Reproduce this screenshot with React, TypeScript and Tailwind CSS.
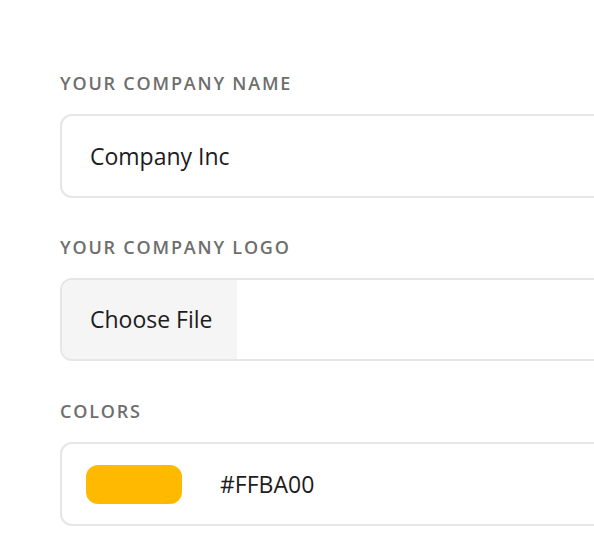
export default function App() {
  return (
    <div className="h-[550px] w-[594px] overflow-hidden bg-white" style={{ fontFamily: "'Open Sans', 'Noto Sans', sans-serif" }}>
      <div className="flex w-[660px] flex-col pl-[60px] pt-[70px]">
        <label className="text-[18px] leading-[26px] font-semibold uppercase tracking-[0.1em] text-[#6e6e6e]">
          Your Company Name
        </label>
        <div className="mt-[18px] flex h-[84px] items-center rounded-[12px] border-2 border-[#e6e6e6] px-[28px]">
          <span className="text-[23px] text-[#1c1c1c]">Company Inc</span>
        </div>

        <label className="mt-[36px] text-[18px] leading-[26px] font-semibold uppercase tracking-[0.1em] text-[#6e6e6e]">
          Your Company Logo
        </label>
        <div className="mt-[18px] flex h-[83px] overflow-hidden rounded-[12px] border-2 border-[#e6e6e6]">
          <div className="flex w-[175px] items-center bg-[#f5f5f5] pl-[28px]">
            <span className="text-[23px] text-[#1c1c1c]">Choose File</span>
          </div>
        </div>

        <label className="mt-[37px] text-[18px] leading-[26px] font-semibold uppercase tracking-[0.1em] text-[#6e6e6e]">
          Colors
        </label>
        <div className="mt-[18px] flex h-[84px] items-center rounded-[12px] border-2 border-[#e6e6e6] pl-[24px]">
          <div className="h-[39px] w-[96px] rounded-[12px] bg-[#ffba00]" />
          <span className="ml-[38px] text-[23px] text-[#1c1c1c]">#FFBA00</span>
        </div>
      </div>
    </div>
  );
}
